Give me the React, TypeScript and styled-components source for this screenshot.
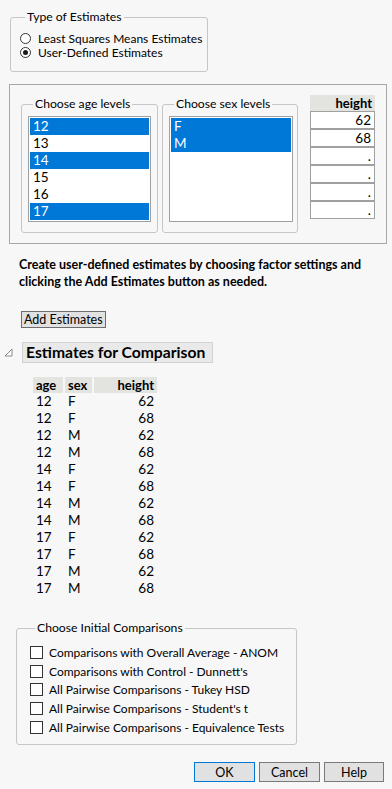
import styled, { createGlobalStyle } from 'styled-components'

const GlobalStyle = createGlobalStyle`
  html, body {
    margin: 0;
    padding: 0;
    background: #f7f7f7;
  }
  body {
    font-family: Lato, "Noto Sans", sans-serif;
    font-size: 12px;
    color: #000;
  }
`

const Page = styled.div`
  width: 392px;
  height: 789px;
  overflow: hidden;
  display: flex;
  flex-direction: column;
  align-items: flex-start;
`

const Group = styled.fieldset<{ $w: number; $h: number }>`
  margin: 0;
  padding: 0 6px;
  width: ${(p) => p.$w}px;
  height: ${(p) => p.$h}px;
  box-sizing: border-box;
  border: 1px solid #c6c6c6;
  border-radius: 3px;
  min-width: 0;
`

const Legend = styled.legend`
  padding: 0 2px;
  margin-left: 5px;
  line-height: 14px;
  font-size: 12.2px;
  white-space: nowrap;
`

const TypeGroup = styled(Group)`
  margin: 10px 0 0 10px;
  padding: 8px 9px 0;
`

const OptionRow = styled.label`
  display: flex;
  align-items: center;
  gap: 7px;
  height: 13.5px;
  line-height: 13px;
  font-size: 12px;
  white-space: nowrap;
`

const Radio = styled.span<{ $on?: boolean }>`
  width: 11px;
  height: 11px;
  box-sizing: border-box;
  border-radius: 50%;
  border: 1px solid #333;
  background: #fff;
  display: flex;
  align-items: center;
  justify-content: center;
  flex: none;

  &::after {
    content: '';
    width: 5px;
    height: 5px;
    border-radius: 50%;
    background: ${(p) => (p.$on ? '#1a1a1a' : 'transparent')};
  }
`

const Panel = styled.div`
  margin: 12px 0 0 9px;
  width: 378px;
  height: 160px;
  box-sizing: border-box;
  border: 1px solid #a8a8a8;
  display: flex;
  align-items: flex-start;
  padding: 10px 0 0 11px;
`

const LevelGroup = styled(Group)`
  margin-top: 2px;
  padding: 5px 6px 0;
`

const ListBox = styled.div<{ $w: number }>`
  width: ${(p) => p.$w}px;
  height: 106px;
  box-sizing: border-box;
  border: 1px solid #a0a0a0;
  background: #fff;
  padding: 1px;
`

const ListItem = styled.div<{ $sel?: boolean }>`
  height: 17px;
  line-height: 17px;
  padding-left: 3px;
  font-size: 13.5px;
  background: ${(p) => (p.$sel ? '#0078d7' : 'transparent')};
  color: ${(p) => (p.$sel ? '#fff' : '#000')};
`

const HeightCol = styled.div`
  margin-left: 12px;
  width: 65px;
  display: flex;
  flex-direction: column;
`

const ColHead = styled.div<{ $align?: string }>`
  height: 16px;
  line-height: 16px;
  background: #e3e3df;
  font-weight: 700;
  font-size: 13px;
  text-align: ${(p) => p.$align || 'left'};
  padding: 0 3px;
`

const Cell = styled.div`
  height: 18px;
  box-sizing: border-box;
  border: 1px solid #a0a0a0;
  background: #fff;
  text-align: right;
  padding-right: 3px;
  line-height: 16px;
  font-size: 13.5px;
`

const Instructions = styled.p`
  margin: 12px 0 0 19px;
  font-weight: 700;
  font-size: 12.5px;
  line-height: 17px;
  white-space: nowrap;
`

const Button = styled.button<{ $w?: number; $focus?: boolean }>`
  font-family: Lato, "Noto Sans", sans-serif;
  font-size: 12.5px;
  color: #000;
  background: #e1e1e1;
  border: 1px solid ${(p) => (p.$focus ? '#0078d7' : '#7a7a7a')};
  padding: 0;
  margin: 0;
  height: ${(p) => (p.$w ? 20 : 17)}px;
  width: ${(p) => (p.$w ? `${p.$w}px` : 'auto')};
  line-height: 15px;
`

const AddButton = styled(Button)`
  margin: 21px 0 0 21px;
  padding: 0 2px;
  border-color: #6d6d6d;
  white-space: nowrap;
`

const OutlineRow = styled.div`
  margin: 14px 0 0 4px;
  display: flex;
  align-items: center;
  gap: 9px;
`

const OutlineTitle = styled.div`
  height: 21px;
  box-sizing: border-box;
  width: 191px;
  border: 1px solid #d2d2d2;
  background: #e9e9e9;
  font-weight: 700;
  font-size: 15.7px;
  line-height: 19px;
  padding-left: 3px;
  white-space: nowrap;
`

const Table = styled.div`
  margin: 14px 0 0 33px;
  display: grid;
  grid-template-columns: 30px 27px 63px;
  column-gap: 2px;
`

const TCell = styled.div<{ $right?: boolean }>`
  height: 17px;
  line-height: 17px;
  font-size: 13.5px;
  padding: 0 3px;
  text-align: ${(p) => (p.$right ? 'right' : 'left')};
`

const CompareGroup = styled(Group)`
  margin: 24px 0 0 16px;
  padding: 8px 13px 0;
`

const CheckRow = styled.label`
  display: flex;
  align-items: center;
  gap: 6px;
  height: 18.8px;
  white-space: nowrap;
  font-size: 12px;
`

const Check = styled.span`
  width: 13px;
  height: 13px;
  box-sizing: border-box;
  border: 1px solid #333;
  background: #fff;
  flex: none;
`

const ButtonBar = styled.div`
  align-self: flex-end;
  margin: 17px 8px 0 0;
  display: flex;
  gap: 4px;
`

const ageLevels = ['12', '13', '14', '15', '16', '17']
const ageSel = ['12', '14', '17']
const heights = ['62', '68', '.', '.', '.', '.']

const rows: [string, string, string][] = []
for (const a of ['12', '14', '17'])
  for (const s of ['F', 'M'])
    for (const h of ['62', '68']) rows.push([a, s, h])

const comparisons = [
  'Comparisons with Overall Average - ANOM',
  "Comparisons with Control - Dunnett's",
  'All Pairwise Comparisons - Tukey HSD',
  "All Pairwise Comparisons - Student's t",
  'All Pairwise Comparisons - Equivalence Tests',
]

const OutlineIcon = () => (
  <svg width="9" height="9" viewBox="0 0 9 9">
    <path d="M8 1 L8 8 L1 8 Z" fill="#fff" stroke="#8a8a8a" strokeWidth="1" />
  </svg>
)

export default function App() {
  return (
    <Page>
      <GlobalStyle />
      <TypeGroup $w={198} $h={62}>
        <Legend>Type of Estimates</Legend>
        <OptionRow>
          <Radio />
          Least Squares Means Estimates
        </OptionRow>
        <OptionRow>
          <Radio $on />
          User-Defined Estimates
        </OptionRow>
      </TypeGroup>

      <Panel>
        <LevelGroup $w={137} $h={136}>
          <Legend>Choose age levels</Legend>
          <ListBox $w={123}>
            {ageLevels.map((a) => (
              <ListItem key={a} $sel={ageSel.includes(a)}>
                {a}
              </ListItem>
            ))}
          </ListBox>
        </LevelGroup>
        <LevelGroup $w={136} $h={136} style={{ marginLeft: 4 }}>
          <Legend>Choose sex levels</Legend>
          <ListBox $w={124}>
            <ListItem $sel>F</ListItem>
            <ListItem $sel>M</ListItem>
          </ListBox>
        </LevelGroup>
        <HeightCol>
          <ColHead $align="right">height</ColHead>
          {heights.map((h, i) => (
            <Cell key={i}>{h}</Cell>
          ))}
        </HeightCol>
      </Panel>

      <Instructions>
        Create user-defined estimates by choosing factor settings and
        <br />
        clicking the Add Estimates button as needed.
      </Instructions>

      <AddButton>Add Estimates</AddButton>

      <OutlineRow>
        <OutlineIcon />
        <OutlineTitle>Estimates for Comparison</OutlineTitle>
      </OutlineRow>

      <Table>
        <ColHead>age</ColHead>
        <ColHead>sex</ColHead>
        <ColHead $align="right">height</ColHead>
        {rows.map(([a, s, h], i) => (
          <>
            <TCell key={`a${i}`}>{a}</TCell>
            <TCell key={`s${i}`}>{s}</TCell>
            <TCell key={`h${i}`} $right>
              {h}
            </TCell>
          </>
        ))}
      </Table>

      <CompareGroup $w={281} $h={124}>
        <Legend>Choose Initial Comparisons</Legend>
        {comparisons.map((c) => (
          <CheckRow key={c}>
            <Check />
            {c}
          </CheckRow>
        ))}
      </CompareGroup>

      <ButtonBar>
        <Button $w={61} $focus>
          OK
        </Button>
        <Button $w={61}>Cancel</Button>
        <Button $w={60}>Help</Button>
      </ButtonBar>
    </Page>
  )
}
